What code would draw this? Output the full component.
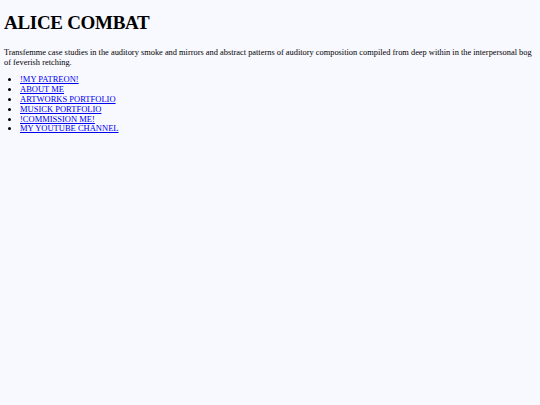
export default function App() {
  const links = [
    "!MY PATREON!",
    "ABOUT ME",
    "ARTWORKS PORTFOLIO",
    "MUSICK PORTFOLIO",
    "!COMMISSION ME!",
    "MY YOUTUBE CHANNEL",
  ];
  return (
    <div className="flow-root min-h-[405px] w-[540px] bg-[#f8f8ff] pl-[4px] pr-[2px] text-black font-['Liberation_Serif',serif]">
      <h1 className="mt-[12px] text-[19px] font-bold leading-[1.149] tracking-[-0.3px]">ALICE COMBAT</h1>
      <p className="mt-[14px] text-[8.4px] leading-[10px]">
        Transfemme case studies in the auditory smoke and mirrors and abstract patterns of auditory composition compiled from deep within in the interpersonal bog of feverish retching.
      </p>
      <ul className="mt-[7.5px] list-disc pl-[16px] text-[8.5px] leading-[9.8px]">
        {links.map((l) => (
          <li key={l}>
            <a href="#" className="text-[#0000ee] underline">{l}</a>
          </li>
        ))}
      </ul>
    </div>
  );
}
